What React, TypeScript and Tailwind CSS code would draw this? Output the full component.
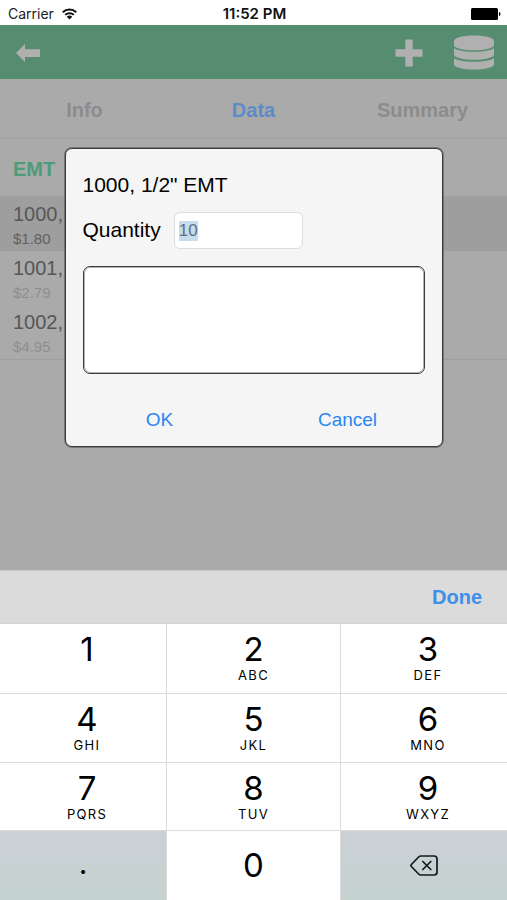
import { useEffect, useRef, useState } from "react";
import clsx from "clsx";

const tabs = ["Info", "Data", "Summary"];

const items = [
  { code: "1000,", price: "$1.80" },
  { code: "1001,", price: "$2.79" },
  { code: "1002,", price: "$4.95" },
];

const keys = [
  { digit: "1", letters: "" },
  { digit: "2", letters: "ABC" },
  { digit: "3", letters: "DEF" },
  { digit: "4", letters: "GHI" },
  { digit: "5", letters: "JKL" },
  { digit: "6", letters: "MNO" },
  { digit: "7", letters: "PQRS" },
  { digit: "8", letters: "TUV" },
  { digit: "9", letters: "WXYZ" },
];

function StatusBar() {
  return (
    <div className="grid h-[25px] grid-cols-[1fr_auto_1fr] items-center bg-white pt-0.5 pr-1.5 pl-2 font-['Inter',sans-serif] text-[14px] leading-5 text-[#222]">
      <div className="flex items-center gap-2">
        <span>Carrier</span>
        <svg width="15" height="12" viewBox="0 0 15 12" aria-hidden="true">
          <path
            d="M.8 4.300a9.600 9.600 0 0 1 13.400 0M3.200 6.900a6.100 6.100 0 0 1 8.600 0"
            fill="none"
            stroke="#111"
            strokeWidth="2"
          />
          <path d="M7.500 11.600 4.700 8.800a4 4 0 0 1 5.600 0Z" fill="#111" />
        </svg>
      </div>
      <span className="text-[15px] font-semibold text-[#111]">11:52 PM</span>
      <svg
        className="justify-self-end"
        width="30"
        height="12"
        viewBox="0 0 30 12"
        aria-hidden="true">
        <rect width="27" height="12" rx="1.5" fill="#000" />
        <path d="M28 4v4c2-.6 2-3.400 0-4Z" fill="#000" />
      </svg>
    </div>
  );
}

function NavBar() {
  return (
    <header className="flex h-[54px] items-center bg-[#568d70] pt-0.5 pr-[13px] pl-4 text-[#b0b0b0]">
      <button aria-label="Back">
        <svg width="24" height="18" viewBox="0 0 24 18" fill="currentColor">
          <path d="M0 9 9 0v5.200h14.200q.8 0 .8.800v6.200q0 .8-.8.800H9V18Z" />
        </svg>
      </button>
      <div className="ml-auto flex items-center gap-[31px]">
        <button aria-label="Add">
          <svg width="28" height="28" viewBox="0 0 28 28" fill="currentColor">
            <path d="M10.300.500h7.400v9.800h9.800v7.400h-9.800v9.800h-7.400v-9.800H.5v-7.400h9.800Z" />
          </svg>
        </button>
        <button aria-label="Database">
          <svg width="40" height="36" viewBox="0 0 40 36" fill="currentColor">
            <path d="M0 6C0 2.600 9 .500 20 .500S40 2.600 40 6v4c0 3.200-9 5.300-20 5.300S0 13.200 0 10Z" />
            <path d="M0 13c3 2.500 10.500 3.700 20 3.700S37 15.500 40 13v6.500c0 3.200-9 5.300-20 5.300S0 22.700 0 19.500Z" />
            <path d="M0 23c3 2.500 10.500 3.700 20 3.700S37 25.500 40 23v6.200c0 3.200-9 5.300-20 5.300S0 32.400 0 29.200Z" />
          </svg>
        </button>
      </div>
    </header>
  );
}

function ItemList() {
  return (
    <section>
      <h2 className="flex h-[58px] items-center border-b border-[#a2a2a2] px-[13px] pt-0.5 text-[20px] font-bold text-[#4c9c78]">
        EMT
      </h2>
      <ul className="border-b border-[#9e9e9e]">
        {items.map((item, i) => (
          <li
            key={item.code}
            className={clsx("h-[54px] px-[13px] pt-1", i === 0 && "bg-[#9e9e9e]")}>
            <p className="text-[20px] leading-[26px] text-[#575757]">
              {item.code}
            </p>
            <p
              className={clsx(
                "text-[15px] leading-6",
                i === 0 ? "text-[#606060]" : "text-[#8e8e8e]",
              )}>
              {item.price}
            </p>
          </li>
        ))}
      </ul>
    </section>
  );
}

function QuantityDialog() {
  const [quantity, setQuantity] = useState("10");
  const [note, setNote] = useState("");
  const inputRef = useRef<HTMLInputElement>(null);

  useEffect(() => {
    inputRef.current?.focus();
    inputRef.current?.select();
  }, []);

  return (
    <div className="absolute inset-0 flex items-start justify-center pt-[123px]">
      <form
        role="dialog"
        aria-label={'1000, 1/2" EMT'}
        onSubmit={(e) => e.preventDefault()}
        className="w-[378px] rounded-[7px] border border-[#3c3c3c] bg-[#f5f5f5] pt-[22px] shadow-[0_0_0_1px_rgba(0,0,0,0.3)]">
        <div className="px-[17px]">
          <h3 className="text-[21px] leading-7 text-black">1000, 1/2" EMT</h3>
          <div className="mt-[13px] flex items-center gap-[13px]">
            <label
              htmlFor="quantity"
              className="pb-0.5 text-[21px] leading-7 text-black">
              Quantity
            </label>
            <input
              id="quantity"
              ref={inputRef}
              value={quantity}
              inputMode="decimal"
              onChange={(e) => setQuantity(e.target.value)}
              className="h-[37px] w-[129px] rounded-md border border-[#dcdcdc] bg-white px-1 text-[17px] text-[#5c6670] outline-none selection:bg-[#c9dcec] selection:text-[#5c7080]"
            />
          </div>
          <textarea
            aria-label="Note"
            value={note}
            onChange={(e) => setNote(e.target.value)}
            className="mt-[17px] block h-[108px] w-full resize-none rounded-[7px] border border-[#3c3c3c] bg-white p-2 shadow-[inset_0_0_0_1px_rgba(0,0,0,0.3)] outline-none"
          />
        </div>
        <div className="grid h-[72px] grid-cols-2 pt-[21px] text-[19px] text-[#2b87f0]">
          <button type="submit">OK</button>
          <button type="button">Cancel</button>
        </div>
      </form>
    </div>
  );
}

function Keypad() {
  return (
    <div className="bg-[#dbdbdb]">
      <div className="flex h-[53px] items-center justify-end border-t border-[#c9c9c9] px-[25px]">
        <button className="text-[20px] font-bold text-[#3f8fe8]">Done</button>
      </div>
      <div className="grid grid-cols-[166fr_173fr_166fr] grid-rows-[69px_68px_67px_69px] gap-px border-t border-[#d4d4d4] font-['Inter',sans-serif] text-black">
        {keys.map((key, i) => (
          <button
            key={key.digit}
            className={clsx(
              "flex flex-col items-center bg-white pt-[7px]",
              i % 3 !== 1 && "pl-2",
            )}>
            <span className="text-[33px] leading-9">{key.digit}</span>
            <span className="text-[13px] leading-4 tracking-widest">
              {key.letters}
            </span>
          </button>
        ))}
        <button className="bg-linear-to-b from-[#cbd1d6] to-[#c4d2d0] pb-1 text-[30px]">
          .
        </button>
        <button className="bg-white text-[33px]">0</button>
        <button
          aria-label="Delete"
          className="flex items-center justify-center bg-linear-to-b from-[#cbd1d6] to-[#c4d2d0]">
          <svg
            width="28"
            height="21"
            viewBox="0 0 28 21"
            fill="none"
            stroke="#151a1c"
            strokeWidth="1.7"
            strokeLinecap="round"
            strokeLinejoin="round">
            <path d="M11 1H24q3 0 3 3v13q0 3-3 3H11Q9.600 20 8.600 19L1.400 11.500q-.9-1 0-2L8.600 2Q9.600 1 11 1Z" />
            <path d="m12.800 6.500 8 8m0-8-8 8" />
          </svg>
        </button>
      </div>
    </div>
  );
}

function App() {
  const [activeTab, setActiveTab] = useState("Data");

  return (
    <div className="flex min-h-screen flex-col font-['Liberation_Sans',Arial,sans-serif]">
      <StatusBar />
      <main className="relative flex-1 bg-[#aaaaaa]">
        <NavBar />
        <nav className="grid h-[60px] grid-cols-3 border-b border-[#a2a2a2]">
          {tabs.map((tab) => (
            <button
              key={tab}
              onClick={() => setActiveTab(tab)}
              className={clsx(
                "pt-0.5 text-[20px] font-bold",
                tab === activeTab ? "text-[#5c8cc8]" : "text-[#8c8c8c]",
              )}>
              {tab}
            </button>
          ))}
        </nav>
        <ItemList />
        <QuantityDialog />
      </main>
      <Keypad />
    </div>
  );
}

export default App;
